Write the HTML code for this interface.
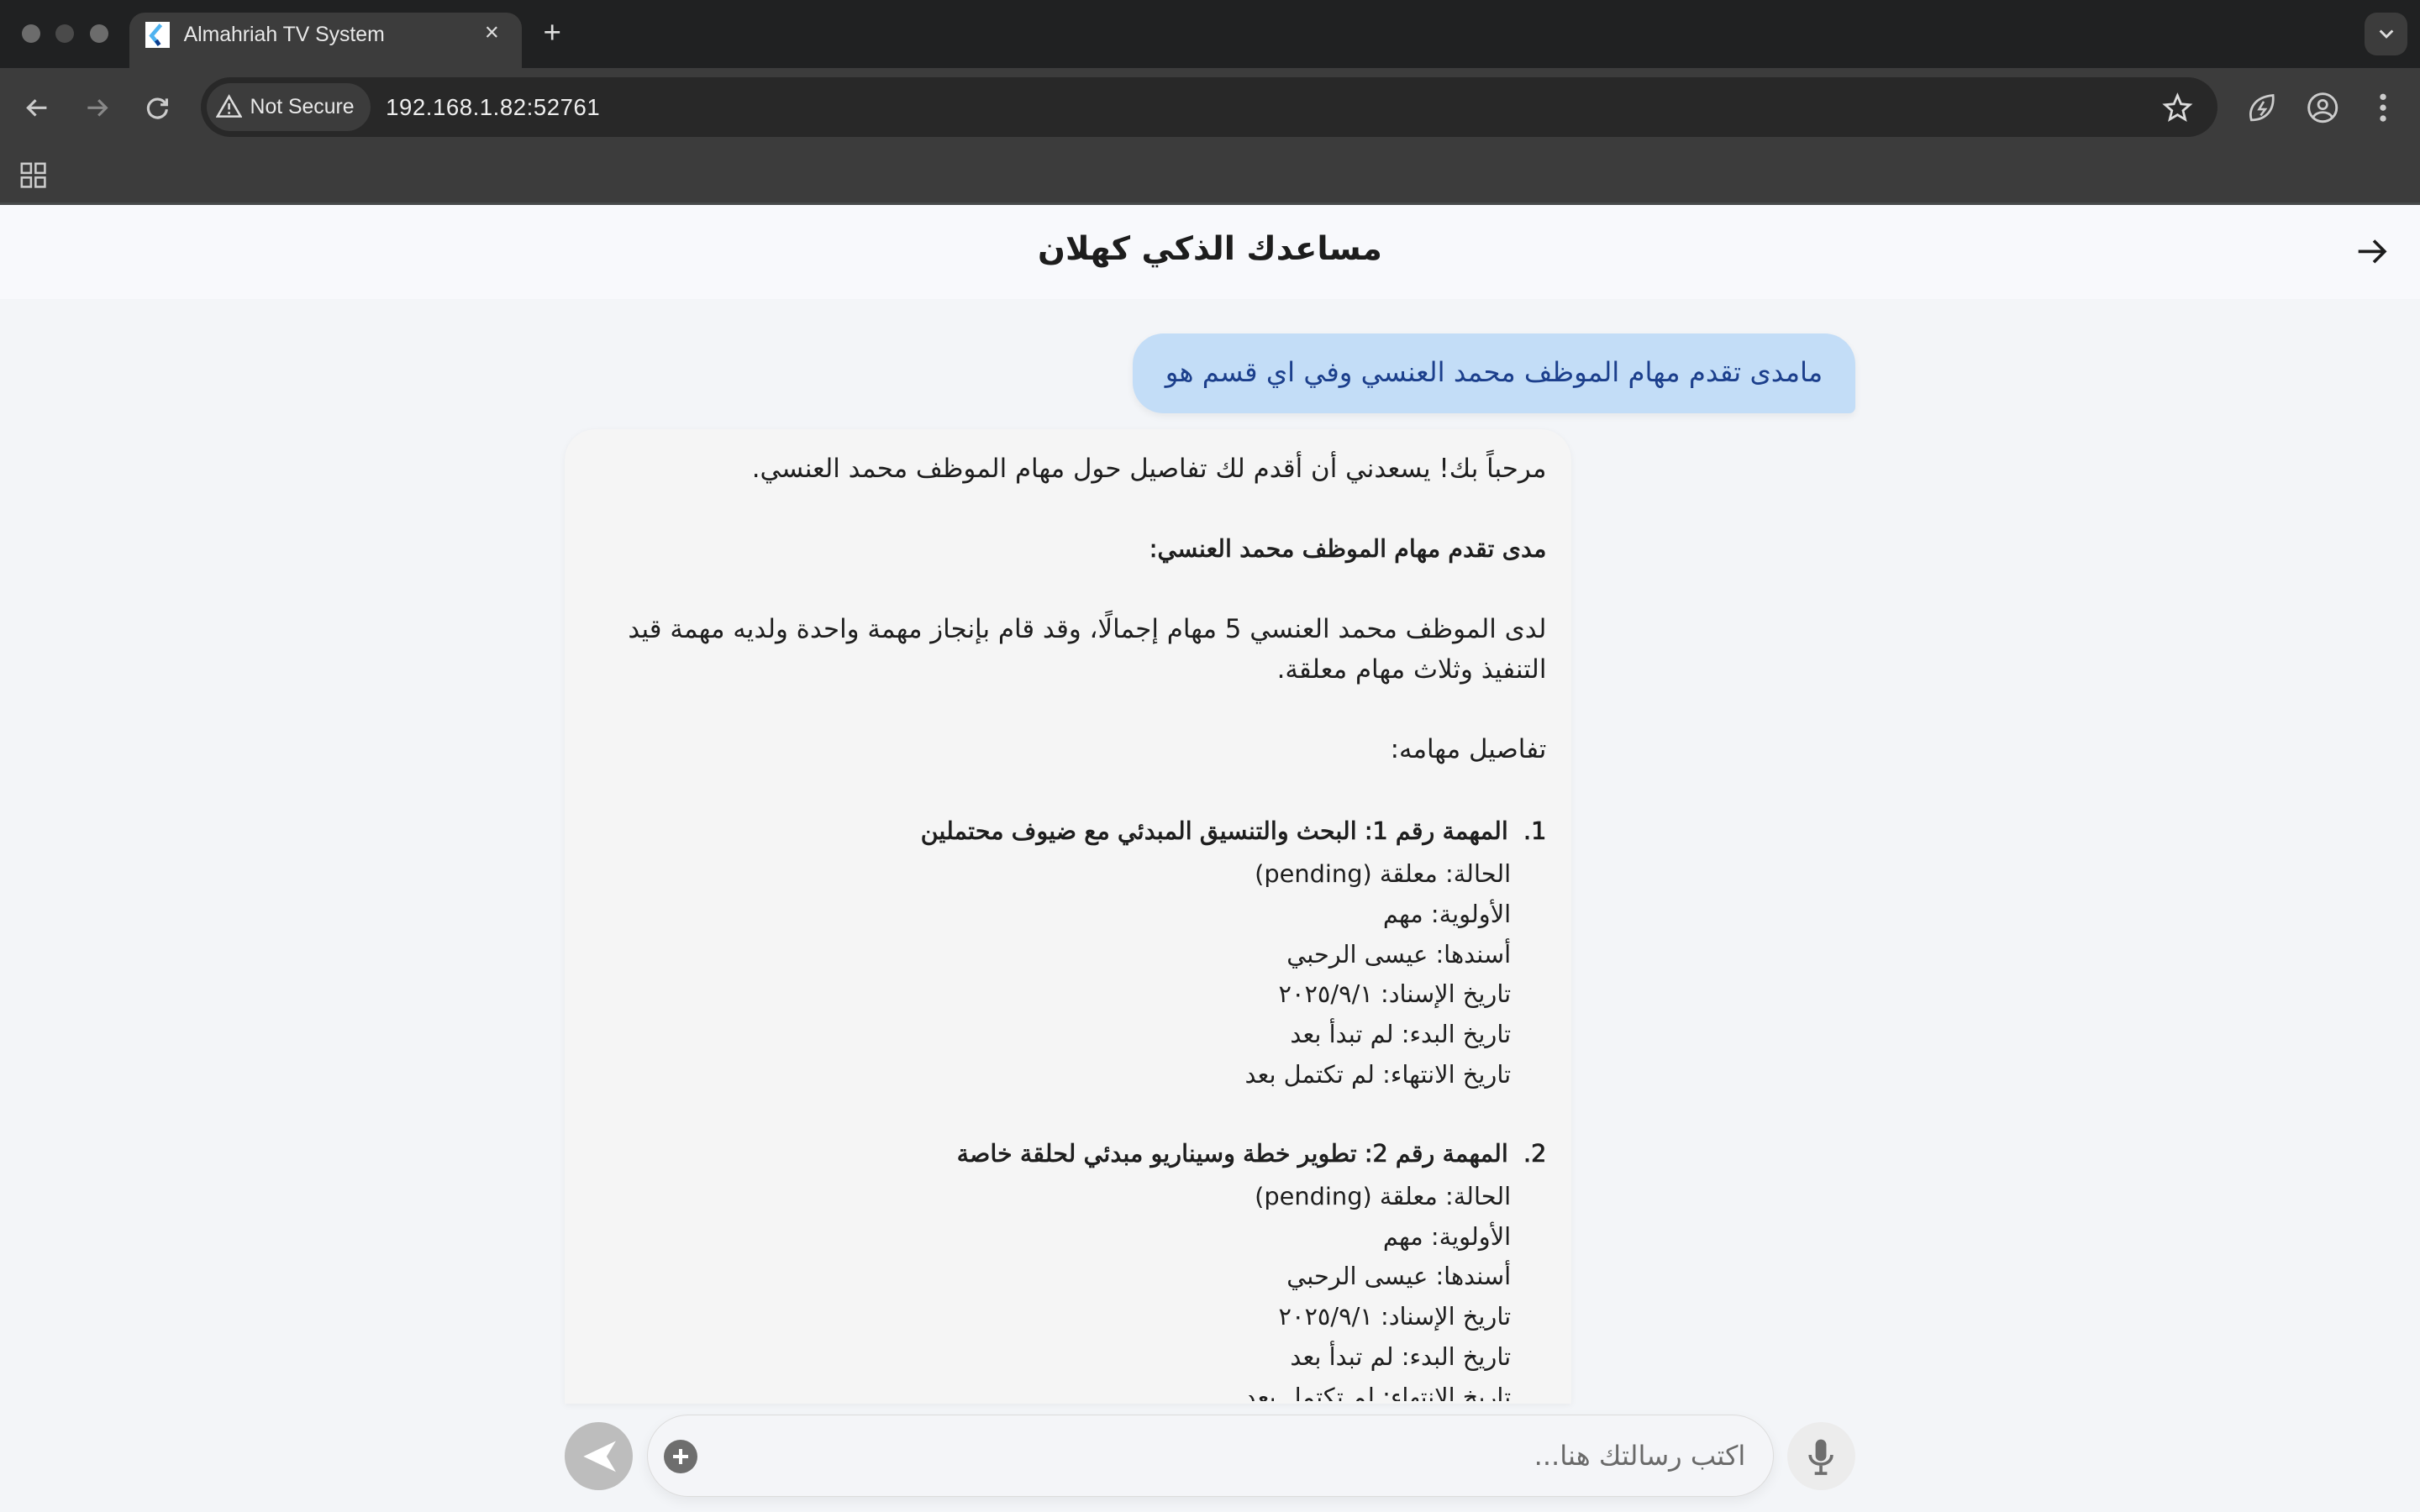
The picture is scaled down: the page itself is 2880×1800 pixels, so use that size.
<!DOCTYPE html>
<html><head><meta charset="utf-8">
<style>
html,body{margin:0;padding:0;overflow:hidden;}
body{width:2880px;height:1800px;background:#f3f5f8;}
#w{zoom:1.83673;width:1568px;height:980px;position:relative;font-family:"Liberation Sans","Noto Sans CJK SC",sans-serif;}
.a{position:absolute;}
.t{position:absolute;white-space:nowrap;direction:rtl;font-family:"DejaVu Sans","Noto Sans CJK SC",sans-serif;}
.ln{font-size:16.8px;color:#1e1e1e;right:566px;}
.ln2{font-size:15.7px;color:#1e1e1e;right:589px;}
.b{font-size:15.6px;-webkit-text-stroke:0.45px #1e1e1e;}
</style></head><body><div id="w">
<!-- tab strip -->
<div class="a" style="left:0;top:0;width:1568px;height:44px;background:#202122"></div>
<div class="a" style="left:14px;top:16px;width:12px;height:12px;border-radius:50%;background:#6c6c6c"></div>
<div class="a" style="left:36px;top:16px;width:12px;height:12px;border-radius:50%;background:#4a4a4a"></div>
<div class="a" style="left:58px;top:16px;width:12px;height:12px;border-radius:50%;background:#6c6c6c"></div>
<div class="a" style="left:84px;top:8px;width:254px;height:40px;border-radius:10px 10px 0 0;background:#3c3c3c"></div>
<div class="a" style="left:94px;top:14px;width:16px;height:17px;background:#fff"></div>
<svg class="a" style="left:94px;top:14px" width="16" height="17"><path d="M10 2 L4 9 L9 15" stroke="#4fb3f0" stroke-width="2.5" fill="none"/><path d="M7 12 L9 15" stroke="#0d3c8c" stroke-width="2.5"/></svg>
<div class="a" style="left:119px;top:15px;font-size:13.5px;color:#e8e8e8">Almahriah TV System</div>
<div class="a" style="left:314px;top:12px;font-size:16px;color:#ddd">×</div>
<div class="a" style="left:352px;top:10px;font-size:20px;color:#ddd">+</div>
<div class="a" style="left:1532px;top:8px;width:28px;height:28px;border-radius:8px;background:#3c3c3c"></div>
<svg class="a" style="left:1540px;top:17px" width="12" height="10"><path d="M2 3 L6 7 L10 3" stroke="#ddd" stroke-width="1.6" fill="none"/></svg>
<!-- toolbar -->
<div class="a" style="left:0;top:44px;width:1568px;height:87px;background:#3c3c3c"></div>
<div class="a" style="left:0;top:131px;width:1568px;height:2px;background:#474a4a"></div>
<svg class="a" style="left:14px;top:60px" width="20" height="20"><path d="M16 10 H4 M9 5 L4 10 L9 15" stroke="#ccc" stroke-width="1.7" fill="none"/></svg>
<svg class="a" style="left:53px;top:60px" width="20" height="20"><path d="M4 10 H16 M11 5 L16 10 L11 15" stroke="#888" stroke-width="1.7" fill="none"/></svg>
<svg class="a" style="left:92px;top:60px" width="20" height="20"><path d="M15 7 A6 6 0 1 0 16 11" stroke="#ccc" stroke-width="1.7" fill="none"/><path d="M16 4 V8 H12" stroke="#ccc" stroke-width="1.7" fill="none"/></svg>
<div class="a" style="left:130px;top:50px;width:1307px;height:39px;border-radius:20px;background:#282828"></div>
<div class="a" style="left:134px;top:54px;width:106px;height:31px;border-radius:16px;background:#3c3c3c"></div>
<svg class="a" style="left:140px;top:61px" width="17" height="16"><path d="M8.5 1.5 L16 14.5 H1 Z" stroke="#ddd" stroke-width="1.4" fill="none"/><path d="M8.5 6 V10 M8.5 11.5 V13" stroke="#ddd" stroke-width="1.4"/></svg>
<div class="a" style="left:162px;top:62px;font-size:13.5px;color:#e8e8e8">Not Secure</div>
<div class="a" style="left:250px;top:61px;font-size:15px;color:#eee;letter-spacing:0.3px">192.168.1.82:52761</div>
<svg class="a" style="left:1401px;top:60px" width="20" height="20"><path d="M10 2 L12.3 7.5 L18 8 L13.6 11.8 L15 17.5 L10 14.5 L5 17.5 L6.4 11.8 L2 8 L7.7 7.5 Z" stroke="#ddd" stroke-width="1.5" fill="none"/></svg>
<svg class="a" style="left:1455px;top:59px" width="22" height="22"><path d="M4 19 C2 12 6 4 18 3 C19 14 12 19 4 19 Z" stroke="#ccc" stroke-width="1.5" fill="none"/><path d="M12 7 L9 12 H13 L10 16" stroke="#ccc" stroke-width="1.4" fill="none"/></svg>
<svg class="a" style="left:1494px;top:59px" width="22" height="22"><circle cx="11" cy="11" r="9" stroke="#ccc" stroke-width="1.6" fill="none"/><circle cx="11" cy="9" r="2.8" stroke="#ccc" stroke-width="1.5" fill="none"/><path d="M5 17 C7 13 15 13 17 17" stroke="#ccc" stroke-width="1.5" fill="none"/></svg>
<svg class="a" style="left:1538px;top:59px" width="12" height="22"><circle cx="6" cy="4" r="2" fill="#ccc"/><circle cx="6" cy="11" r="2" fill="#ccc"/><circle cx="6" cy="18" r="2" fill="#ccc"/></svg>
<svg class="a" style="left:13px;top:105px" width="17" height="17"><rect x="1" y="1" width="6" height="6" stroke="#ccc" stroke-width="1.4" fill="none"/><rect x="10" y="1" width="6" height="6" stroke="#ccc" stroke-width="1.4" fill="none"/><rect x="1" y="10" width="6" height="6" stroke="#ccc" stroke-width="1.4" fill="none"/><rect x="10" y="10" width="6" height="6" stroke="#ccc" stroke-width="1.4" fill="none"/></svg>
<!-- header -->
<div class="a" style="left:0;top:133px;width:1568px;height:61px;background:#f8f9fc"></div>
<div class="t" style="left:0;width:1568px;text-align:center;top:149px;font-size:21px;font-weight:bold;color:#1d1d1d">مساعدك الذكي كهلان</div>
<svg class="a" style="left:1526px;top:153px" width="22" height="20"><path d="M2 10 H19 M12 3 L19 10 L12 17" stroke="#1d1d1d" stroke-width="2" fill="none"/></svg>
<!-- user bubble -->
<div class="a" style="left:734px;top:216px;width:468px;height:52px;border-radius:20px 20px 4px 20px;background:#c3ddf7;box-shadow:0 2px 5px rgba(0,0,0,.06)"></div>
<div class="t" style="right:387px;top:231px;font-size:17.6px;color:#1c3f8c">مامدى تقدم مهام الموظف محمد العنسي وفي اي قسم هو</div>
<!-- bot bubble -->
<div class="a" style="left:366px;top:278px;width:652px;height:632px;border-radius:20px 20px 0 0;background:#f5f5f5;box-shadow:0 1px 4px rgba(0,0,0,.05)"></div>
<div style="position:absolute;left:366px;top:278px;width:652px;height:630px;overflow:hidden">
<div style="position:relative;left:-366px;top:-278px;width:1568px;height:980px">
<div class="t ln" style="top:294px">مرحباً بك! يسعدني أن أقدم لك تفاصيل حول مهام الموظف محمد العنسي.</div>
<div class="t ln b" style="top:346px">مدى تقدم مهام الموظف محمد العنسي:</div>
<div class="t ln" style="top:398px">لدى الموظف محمد العنسي 5 مهام إجمالًا، وقد قام بإنجاز مهمة واحدة ولديه مهمة قيد</div>
<div class="t ln" style="top:424px">التنفيذ وثلاث مهام معلقة.</div>
<div class="t ln" style="top:476px">تفاصيل مهامه:</div>
<div class="t ln b" style="top:529px">1.&nbsp; المهمة رقم 1: البحث والتنسيق المبدئي مع ضيوف محتملين</div>
<div class="t ln2" style="top:557px">الحالة: معلقة (pending)</div>
<div class="t ln2" style="top:583px">الأولوية: مهم</div>
<div class="t ln2" style="top:609px">أسندها: عيسى الرحبي</div>
<div class="t ln2" style="top:635px">تاريخ الإسناد: ٢٠٢٥/٩/١</div>
<div class="t ln2" style="top:661px">تاريخ البدء: لم تبدأ بعد</div>
<div class="t ln2" style="top:687px">تاريخ الانتهاء: لم تكتمل بعد</div>
<div class="t ln b" style="top:738px">2.&nbsp; المهمة رقم 2: تطوير خطة وسيناريو مبدئي لحلقة خاصة</div>
<div class="t ln2" style="top:766px">الحالة: معلقة (pending)</div>
<div class="t ln2" style="top:792px">الأولوية: مهم</div>
<div class="t ln2" style="top:818px">أسندها: عيسى الرحبي</div>
<div class="t ln2" style="top:844px">تاريخ الإسناد: ٢٠٢٥/٩/١</div>
<div class="t ln2" style="top:870px">تاريخ البدء: لم تبدأ بعد</div>
<div class="t ln2" style="top:896px">تاريخ الانتهاء: لم تكتمل بعد</div>
</div></div>
<!-- input -->
<div class="a" style="left:366px;top:922px;width:44px;height:44px;border-radius:50%;background:#bdbdbd"></div>
<svg class="a" style="left:374px;top:931px" width="28" height="26"><path d="M25 3 L4 13 L25 23 L19 13 Z" fill="#fff"/></svg>
<div class="a" style="left:419px;top:917px;width:729px;height:52px;border-radius:27px;background:#f4f5f8;border:1px solid #dcdcdc;box-shadow:0 3px 8px rgba(0,0,0,.06)"></div>
<div class="a" style="left:430px;top:933px;width:22px;height:22px;border-radius:50%;background:#6e6e6e"></div>
<div class="a" style="left:436px;top:943px;width:10px;height:2px;background:#fff"></div>
<div class="a" style="left:440px;top:939px;width:2px;height:10px;background:#fff"></div>
<div class="t" style="right:437px;top:933px;font-size:17.5px;color:#6a6a6a">اكتب رسالتك هنا...</div>
<div class="a" style="left:1158px;top:922px;width:44px;height:44px;border-radius:50%;background:#ececec"></div>
<svg class="a" style="left:1168px;top:931px" width="24" height="26"><rect x="8.5" y="2" width="7" height="14" rx="3.5" fill="#6e6e6e"/><path d="M5 12 C5 20 19 20 19 12" stroke="#6e6e6e" stroke-width="2" fill="none"/><path d="M12 19 V24 M8 24 H16" stroke="#6e6e6e" stroke-width="2"/></svg>
</div></body></html>
